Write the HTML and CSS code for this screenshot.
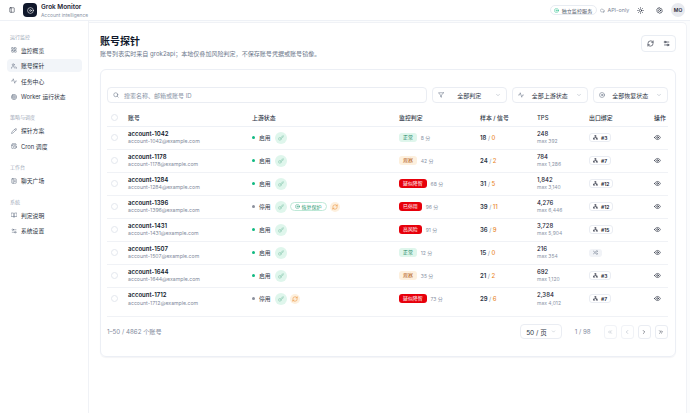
FILE: index.html
```html
<!DOCTYPE html>
<html lang="zh-CN">
<head>
  <meta charset="UTF-8" />
  <title>Grok Monitor</title>
  <link rel="stylesheet" href="styles.css">
</head>
<body>

  <svg class="sprite" width="0" height="0">
    <symbol id="i-panel" viewBox="0 0 24 24"><rect x="3" y="3" width="18" height="18" rx="2"/><path d="M9 3v18"/></symbol>
    <symbol id="i-search" viewBox="0 0 24 24"><circle cx="11" cy="11" r="8"/><path d="m21 21-4.3-4.3"/></symbol>
    <symbol id="i-funnel" viewBox="0 0 24 24"><path d="M22 3H2l8 9.46V19l4 2v-8.54L22 3z"/></symbol>
    <symbol id="i-activity" viewBox="0 0 24 24"><path d="M22 12h-4l-3 9L9 3l-3 9H2"/></symbol>
    <symbol id="i-target" viewBox="0 0 24 24"><circle cx="12" cy="12" r="10"/><circle cx="12" cy="12" r="3"/></symbol>
    <symbol id="i-down" viewBox="0 0 24 24"><path d="m6 9 6 6 6-6"/></symbol>
    <symbol id="i-refresh" viewBox="0 0 24 24"><path d="M3 12a9 9 0 0 1 9-9 9.75 9.75 0 0 1 6.74 2.74L21 8"/><path d="M21 3v5h-5"/><path d="M21 12a9 9 0 0 1-9 9 9.75 9.75 0 0 1-6.74-2.74L3 16"/><path d="M8 16H3v5"/></symbol>
    <symbol id="i-sliders" viewBox="0 0 24 24"><path d="M20 7h-9"/><path d="M14 17H5"/><circle cx="17" cy="17" r="3"/><circle cx="7" cy="7" r="3"/></symbol>
    <symbol id="i-eye" viewBox="0 0 24 24"><path d="M2 12s3-7 10-7 10 7 10 7-3 7-10 7-10-7-10-7Z"/><circle cx="12" cy="12" r="3"/></symbol>
    <symbol id="i-key" viewBox="0 0 24 24"><circle cx="7.5" cy="15.5" r="5.5"/><path d="m21 2-9.6 9.6"/><path d="m15.5 7.5 3 3L22 7l-3-3"/></symbol>
    <symbol id="i-network" viewBox="0 0 24 24"><rect x="16" y="16" width="6" height="6" rx="1"/><rect x="2" y="16" width="6" height="6" rx="1"/><rect x="9" y="2" width="6" height="6" rx="1"/><path d="M5 16v-3a1 1 0 0 1 1-1h12a1 1 0 0 1 1 1v3"/><path d="M12 12V8"/></symbol>
    <symbol id="i-shuffle" viewBox="0 0 24 24"><path d="m18 14 4 4-4 4"/><path d="m18 2 4 4-4 4"/><path d="M2 18h2c4 0 6-12 10-12h8"/><path d="M2 6h2c4 0 6 12 10 12h8"/></symbol>
    <symbol id="i-sun" viewBox="0 0 24 24"><circle cx="12" cy="12" r="4"/><path d="M12 2v2M12 20v2M4.9 4.9l1.4 1.4M17.7 17.7l1.4 1.4M2 12h2M20 12h2M6.3 17.7l-1.4 1.4M19.1 4.9l-1.4 1.4"/></symbol>
    <symbol id="i-gear" viewBox="0 0 24 24"><path d="M12 2.5l2.2 2.6 3.4-.5 1 3.3 3 1.6-1.3 3.1 1.3 3-3 1.7-1 3.2-3.4-.4L12 22l-2.2-2.9-3.4.4-1-3.2-3-1.7 1.3-3-1.3-3.1 3-1.6 1-3.3 3.4.5z"/><circle cx="12" cy="12" r="3.5"/></symbol>
    <symbol id="i-cloud" viewBox="0 0 24 24"><path d="M17.5 19H9a7 7 0 1 1 6.71-9h1.79a4.5 4.5 0 1 1 0 9Z"/></symbol>
    <symbol id="i-first" viewBox="0 0 24 24"><path d="m11 17-5-5 5-5"/><path d="m18 17-5-5 5-5"/></symbol>
    <symbol id="i-prev" viewBox="0 0 24 24"><path d="m15 18-6-6 6-6"/></symbol>
    <symbol id="i-next" viewBox="0 0 24 24"><path d="m9 18 6-6-6-6"/></symbol>
    <symbol id="i-last" viewBox="0 0 24 24"><path d="m6 17 5-5-5-5"/><path d="m13 17 5-5-5-5"/></symbol>
    <symbol id="i-grid" viewBox="0 0 24 24"><rect x="3" y="3" width="7" height="7" rx="1"/><rect x="14" y="3" width="7" height="7" rx="1"/><rect x="14" y="14" width="7" height="7" rx="1"/><rect x="3" y="14" width="7" height="7" rx="1"/></symbol>
    <symbol id="i-users" viewBox="0 0 24 24"><path d="M16 21v-2a4 4 0 0 0-4-4H6a4 4 0 0 0-4 4v2"/><circle cx="9" cy="7" r="4"/><path d="M22 21v-2a4 4 0 0 0-3-3.87"/></symbol>
    <symbol id="i-cpu" viewBox="0 0 24 24"><rect x="4" y="4" width="16" height="16" rx="2"/><rect x="9" y="9" width="6" height="6"/><path d="M9 1v3M15 1v3M9 20v3M15 20v3M20 9h3M20 15h3M1 9h3M1 15h3"/></symbol>
    <symbol id="i-pencil" viewBox="0 0 24 24"><path d="M17 3a2.85 2.85 0 1 1 4 4L7.5 20.5 2 22l1.5-5.5Z"/><path d="m15 5 4 4"/></symbol>
    <symbol id="i-calendar" viewBox="0 0 24 24"><path d="M21 7.5V6a2 2 0 0 0-2-2H5a2 2 0 0 0-2 2v14a2 2 0 0 0 2 2h3.5"/><path d="M16 2v4M8 2v4M3 10h5"/><circle cx="16" cy="16" r="6"/><path d="M16 14v2l1 1"/></symbol>
    <symbol id="i-chat" viewBox="0 0 24 24"><rect x="3" y="3" width="18" height="18" rx="2"/><path d="M9 3v18M13 9h4M13 14h4"/></symbol>
    <symbol id="i-book" viewBox="0 0 24 24"><path d="M2 4h6a4 4 0 0 1 4 4v13a3 3 0 0 0-3-3H2z"/><path d="M22 4h-6a4 4 0 0 0-4 4v13a3 3 0 0 1 3-3h7z"/></symbol>
  </svg>

  <header class="topbar">
    <div class="topbar-left">
      <svg class="ic ic-6 dark"><use href="#i-panel"/></svg>
      <div class="logo"><svg class="ic ic-7 white"><use href="#i-target"/></svg></div>
      <div class="brand">
        <div class="brand-name">Grok Monitor</div>
        <div class="brand-sub">Account intelligence</div>
      </div>
    </div>
    <div class="topbar-right">
      <div class="service-chip"><svg class="ic ic-5 green"><use href="#i-target"/></svg>独立监控服务</div>
      <div class="api-mode"><svg class="ic ic-5"><use href="#i-cloud"/></svg>API-only</div>
      <svg class="ic ic-7 dark sun"><use href="#i-sun"/></svg>
      <svg class="ic ic-7 dark gear"><use href="#i-gear"/></svg>
      <div class="avatar">MO</div>
    </div>
  </header>

  <div class="layout">
    <nav class="sidebar">
      <div class="nav-group">
        <div class="nav-label">运行监控</div>
        <a class="nav-item"><svg class="ic ic-6"><use href="#i-grid"/></svg>监控概览</a>
        <a class="nav-item active"><svg class="ic ic-6"><use href="#i-users"/></svg>账号探针</a>
        <a class="nav-item"><svg class="ic ic-6"><use href="#i-activity"/></svg>任务中心</a>
        <a class="nav-item"><svg class="ic ic-6"><use href="#i-cpu"/></svg>Worker 运行状态</a>
      </div>
      <div class="nav-group">
        <div class="nav-label">策略与调度</div>
        <a class="nav-item"><svg class="ic ic-6"><use href="#i-pencil"/></svg>探针方案</a>
        <a class="nav-item"><svg class="ic ic-6"><use href="#i-calendar"/></svg>Cron 调度</a>
      </div>
      <div class="nav-group">
        <div class="nav-label">工作台</div>
        <a class="nav-item"><svg class="ic ic-6"><use href="#i-chat"/></svg>聊天广场</a>
      </div>
      <div class="nav-group">
        <div class="nav-label">系统</div>
        <a class="nav-item"><svg class="ic ic-6"><use href="#i-book"/></svg>判定说明</a>
        <a class="nav-item"><svg class="ic ic-6"><use href="#i-sliders"/></svg>系统设置</a>
      </div>
    </nav>

    <main class="main">
      <div class="page-head">
        <div>
          <h1>账号探针</h1>
          <p>账号列表实时来自 grok2api；本地仅叠加风险判定，不保存账号凭据或账号镜像。</p>
        </div>
        <div class="head-actions">
          <svg class="ic ic-7 dark"><use href="#i-refresh"/></svg>
          <svg class="ic ic-7 dark"><use href="#i-sliders"/></svg>
        </div>
      </div>

      <section class="card">
        <div class="filters">
          <div class="field search"><svg class="ic ic-6"><use href="#i-search"/></svg>搜索名称、邮箱或账号 ID</div>
          <div class="field select"><svg class="ic ic-6"><use href="#i-funnel"/></svg><span>全部判定</span><svg class="ic ic-6 pale"><use href="#i-down"/></svg></div>
          <div class="field select"><svg class="ic ic-6"><use href="#i-activity"/></svg><span>全部上游状态</span><svg class="ic ic-6 pale"><use href="#i-down"/></svg></div>
          <div class="field select"><svg class="ic ic-6"><use href="#i-target"/></svg><span>全部恢复状态</span><svg class="ic ic-6 pale"><use href="#i-down"/></svg></div>
        </div>

        <table class="accounts">
          <colgroup>
            <col class="c-check"><col class="c-account"><col class="c-upstream"><col class="c-verdict"><col class="c-sample"><col class="c-tps"><col class="c-bind"><col class="c-op">
          </colgroup>
          <thead>
            <tr><th><span class="check"></span></th><th>账号</th><th>上游状态</th><th>监控判定</th><th>样本 / 信号</th><th>TPS</th><th>出口绑定</th><th>操作</th></tr>
          </thead>
          <tbody>
            <tr>
              <td><span class="check"></span></td>
              <td><div class="name">account-1042</div><div class="mail">account-1042@example.com</div></td>
              <td><div class="status"><i class="dot on"></i>启用<span class="round key"><svg class="ic ic-6"><use href="#i-key"/></svg></span></div></td>
              <td><span class="badge ok">正常</span><span class="ago">8 分</span></td>
              <td class="nums">18 <em>/</em> <b>0</b></td>
              <td><div class="tps">248</div><div class="max">max 392</div></td>
              <td><span class="bind"><svg class="ic ic-5 dark"><use href="#i-network"/></svg>#3</span></td>
              <td><svg class="ic ic-7 dark"><use href="#i-eye"/></svg></td>
            </tr>
            <tr>
              <td><span class="check"></span></td>
              <td><div class="name">account-1178</div><div class="mail">account-1178@example.com</div></td>
              <td><div class="status"><i class="dot on"></i>启用<span class="round key"><svg class="ic ic-6"><use href="#i-key"/></svg></span></div></td>
              <td><span class="badge watch">观察</span><span class="ago">42 分</span></td>
              <td class="nums">24 <em>/</em> <b>2</b></td>
              <td><div class="tps">784</div><div class="max">max 1,286</div></td>
              <td><span class="bind"><svg class="ic ic-5 dark"><use href="#i-network"/></svg>#7</span></td>
              <td><svg class="ic ic-7 dark"><use href="#i-eye"/></svg></td>
            </tr>
            <tr>
              <td><span class="check"></span></td>
              <td><div class="name">account-1284</div><div class="mail">account-1284@example.com</div></td>
              <td><div class="status"><i class="dot on"></i>启用<span class="round key"><svg class="ic ic-6"><use href="#i-key"/></svg></span></div></td>
              <td><span class="badge bad">疑似降智</span><span class="ago">68 分</span></td>
              <td class="nums">31 <em>/</em> <b>5</b></td>
              <td><div class="tps">1,842</div><div class="max">max 3,140</div></td>
              <td><span class="bind"><svg class="ic ic-5 dark"><use href="#i-network"/></svg>#12</span></td>
              <td><svg class="ic ic-7 dark"><use href="#i-eye"/></svg></td>
            </tr>
            <tr>
              <td><span class="check"></span></td>
              <td><div class="name">account-1396</div><div class="mail">account-1396@example.com</div></td>
              <td><div class="status"><i class="dot off"></i>停用<span class="round key"><svg class="ic ic-6"><use href="#i-key"/></svg></span><span class="guard"><svg class="ic ic-5"><use href="#i-target"/></svg>恢复保护</span><span class="round sync"><svg class="ic ic-6"><use href="#i-refresh"/></svg></span></div></td>
              <td><span class="badge bad">已停用</span><span class="ago">96 分</span></td>
              <td class="nums">39 <em>/</em> <b>11</b></td>
              <td><div class="tps">4,276</div><div class="max">max 6,446</div></td>
              <td><span class="bind"><svg class="ic ic-5 dark"><use href="#i-network"/></svg>#12</span></td>
              <td><svg class="ic ic-7 dark"><use href="#i-eye"/></svg></td>
            </tr>
            <tr>
              <td><span class="check"></span></td>
              <td><div class="name">account-1431</div><div class="mail">account-1431@example.com</div></td>
              <td><div class="status"><i class="dot on"></i>启用<span class="round key"><svg class="ic ic-6"><use href="#i-key"/></svg></span></div></td>
              <td><span class="badge bad">高风险</span><span class="ago">91 分</span></td>
              <td class="nums">36 <em>/</em> <b>9</b></td>
              <td><div class="tps">3,728</div><div class="max">max 5,904</div></td>
              <td><span class="bind"><svg class="ic ic-5 dark"><use href="#i-network"/></svg>#15</span></td>
              <td><svg class="ic ic-7 dark"><use href="#i-eye"/></svg></td>
            </tr>
            <tr>
              <td><span class="check"></span></td>
              <td><div class="name">account-1507</div><div class="mail">account-1507@example.com</div></td>
              <td><div class="status"><i class="dot on"></i>启用<span class="round key"><svg class="ic ic-6"><use href="#i-key"/></svg></span></div></td>
              <td><span class="badge ok">正常</span><span class="ago">12 分</span></td>
              <td class="nums">15 <em>/</em> <b>0</b></td>
              <td><div class="tps">216</div><div class="max">max 354</div></td>
              <td><span class="bind none"><svg class="ic ic-5"><use href="#i-shuffle"/></svg></span></td>
              <td><svg class="ic ic-7 dark"><use href="#i-eye"/></svg></td>
            </tr>
            <tr>
              <td><span class="check"></span></td>
              <td><div class="name">account-1644</div><div class="mail">account-1644@example.com</div></td>
              <td><div class="status"><i class="dot on"></i>启用<span class="round key"><svg class="ic ic-6"><use href="#i-key"/></svg></span></div></td>
              <td><span class="badge watch">观察</span><span class="ago">35 分</span></td>
              <td class="nums">21 <em>/</em> <b>2</b></td>
              <td><div class="tps">692</div><div class="max">max 1,120</div></td>
              <td><span class="bind"><svg class="ic ic-5 dark"><use href="#i-network"/></svg>#3</span></td>
              <td><svg class="ic ic-7 dark"><use href="#i-eye"/></svg></td>
            </tr>
            <tr>
              <td><span class="check"></span></td>
              <td><div class="name">account-1712</div><div class="mail">account-1712@example.com</div></td>
              <td><div class="status"><i class="dot off"></i>停用<span class="round key"><svg class="ic ic-6"><use href="#i-key"/></svg></span><span class="round sync"><svg class="ic ic-6"><use href="#i-refresh"/></svg></span></div></td>
              <td><span class="badge bad">疑似降智</span><span class="ago">73 分</span></td>
              <td class="nums">29 <em>/</em> <b>6</b></td>
              <td><div class="tps">2,384</div><div class="max">max 4,012</div></td>
              <td><span class="bind"><svg class="ic ic-5 dark"><use href="#i-network"/></svg>#7</span></td>
              <td><svg class="ic ic-7 dark"><use href="#i-eye"/></svg></td>
            </tr>
          </tbody>
        </table>

        <div class="pager">
          <div class="total">1–50 / 4862 个账号</div>
          <div class="pager-right">
            <div class="per-page">50 / 页<svg class="ic ic-5 pale"><use href="#i-down"/></svg></div>
            <div class="page-no">1 / 98</div>
            <div class="page-btn off"><svg class="ic ic-6"><use href="#i-first"/></svg></div>
            <div class="page-btn off"><svg class="ic ic-6"><use href="#i-prev"/></svg></div>
            <div class="page-btn"><svg class="ic ic-6"><use href="#i-next"/></svg></div>
            <div class="page-btn"><svg class="ic ic-6"><use href="#i-last"/></svg></div>
          </div>
        </div>
      </section>
    </main>
  </div>

</body>
</html>
```

FILE: styles.css
```css
* {
  box-sizing: border-box;
}

html, body {
  margin: 0;
  height: 100%;
  overflow: hidden;
}

body {
  font-family: Inter, "Noto Sans CJK SC", sans-serif;
  font-size: 6px;
  color: #1c2333;
  background: #fbfcfd;
}

.sprite {
  display: block;
  height: 0;
}

.ic {
  flex: none;
  fill: none;
  stroke: #5f6b7e;
  stroke-width: 2;
  stroke-linecap: round;
  stroke-linejoin: round;
}
.ic-5 { width: 5px; height: 5px; }
.ic-6 { width: 6px; height: 6px; }
.ic-7 { width: 7px; height: 7px; }
.dark { stroke: #1c2333; }
.white { stroke: #fff; }
.green { stroke: #10b981; }
.pale { stroke: #a3acb9; }

/* top bar */
.topbar {
  display: flex;
  justify-content: space-between;
  align-items: center;
  height: 21px;
  padding: 0 5px 0 9px;
  border-bottom: 1px solid #eef1f6;
  background: #fff;
}

.topbar-left, .topbar-right {
  display: flex;
  align-items: center;
}

.logo {
  display: flex;
  align-items: center;
  justify-content: center;
  width: 14px;
  height: 14px;
  margin-left: 8px;
  border-radius: 4px;
  background: #10182b;
}

.brand {
  margin-left: 4px;
}

.brand-name {
  font-size: 6.4px;
  font-weight: 600;
  line-height: 8px;
}

.brand-sub {
  margin-top: 1px;
  font-size: 4.9px;
  line-height: 6px;
  color: #8a94a6;
}

.service-chip {
  display: flex;
  align-items: center;
  gap: 2.5px;
  height: 10px;
  padding: 0 3.5px;
  border: 1px solid #e8ecf2;
  border-radius: 5px;
  font-size: 5.1px;
  color: #475063;
}

.api-mode {
  display: flex;
  align-items: center;
  gap: 2px;
  margin-left: 3.7px;
  font-size: 5.4px;
  color: #7b8698;
}

.sun { margin-left: 7.5px; }
.gear { margin-left: 12.2px; }

.avatar {
  display: flex;
  align-items: center;
  justify-content: center;
  width: 14px;
  height: 14px;
  margin-left: 8px;
  border-radius: 50%;
  background: #e8eaef;
  font-size: 5px;
  font-weight: 600;
}

/* sidebar */
.layout {
  display: flex;
  height: 392px;
}

.sidebar {
  flex: none;
  width: 89px;
  padding: 11.6px 6px 0 7px;
  background: #fff;
  border-right: 1px solid #f0f2f6;
}

.nav-group {
  margin-bottom: 10.4px;
}

.nav-label {
  height: 8.5px;
  padding-left: 3px;
  font-size: 5px;
  line-height: 8px;
  color: #a0a9b8;
}

.nav-item {
  display: flex;
  align-items: center;
  gap: 4.5px;
  height: 13px;
  margin-top: 2.5px;
  padding-left: 3.5px;
  border-radius: 4px;
  font-size: 5.8px;
  color: #2d3545;
}

.nav-item.active {
  background: #f2f5f9;
}

/* main */
.main {
  flex: 1;
  margin: 1px 3px 0 0;
  padding: 10px 10px 0 11px;
  background: #fff;
  border: 1px solid #f0f2f6;
  border-left: 0;
  border-bottom: 0;
  border-radius: 0 5px 0 0;
}

.page-head {
  display: flex;
  justify-content: space-between;
  align-items: flex-start;
  height: 33px;
}

h1 {
  margin: 1px 0 0;
  font-size: 10px;
  font-weight: 600;
  line-height: 14px;
  color: #10182b;
}

.page-head p {
  margin: 2px 0 0;
  font-size: 6.05px;
  line-height: 8px;
  color: #6d788b;
}

.head-actions {
  display: flex;
  align-items: center;
  gap: 9px;
  height: 17px;
  margin-top: 2px;
  padding: 0 5px;
  border: 1px solid #e9edf3;
  border-radius: 4px;
}

.card {
  margin-top: 3px;
  height: 288px;
  padding: 17px 7px 0 6px;
  border: 1px solid #eceff5;
  border-radius: 6px;
  box-shadow: 0 1px 1px rgba(30, 40, 70, 0.05);
}

.filters {
  display: flex;
  gap: 5px;
}

.field {
  display: flex;
  align-items: center;
  height: 16px;
  border: 1px solid #eaedf3;
  border-radius: 4px;
  font-size: 6px;
  background: #fff;
}

.search {
  flex: 1;
  gap: 5px;
  padding-left: 5px;
  color: #8a94a6;
}

.select {
  flex: none;
  width: 75.5px;
  padding: 0 5px;
  color: #2d3545;
}

.select span {
  flex: 1;
  text-align: center;
}

/* table */
.accounts {
  width: 100%;
  margin-top: 7px;
  border-collapse: collapse;
  table-layout: fixed;
}

.c-check { width: 21px; }
.c-account { width: 124px; }
.c-upstream { width: 147px; }
.c-verdict { width: 81px; }
.c-sample { width: 57px; }
.c-tps { width: 52px; }
.c-bind { width: 65px; }

.accounts th {
  height: 16px;
  padding: 0;
  border-bottom: 1px solid #eef1f6;
  font-size: 5.9px;
  font-weight: 500;
  text-align: left;
  white-space: nowrap;
  color: #2d3545;
}

.accounts td {
  height: 23px;
  padding: 0;
  border-bottom: 1px solid #f0f2f6;
  vertical-align: middle;
  white-space: nowrap;
}

.accounts tbody tr:last-child td {
  border-bottom: 0;
}

.accounts th:first-child, .accounts td:first-child {
  padding-left: 4px;
}

.check {
  display: block;
  width: 7px;
  height: 7px;
  border: 1px solid #e3e7ee;
  border-radius: 50%;
}

.name {
  font-size: 6px;
  font-weight: 600;
  line-height: 8px;
  color: #10182b;
}

.mail {
  margin-top: 0.5px;
  font-size: 5.2px;
  line-height: 7px;
  color: #7f8a9c;
}

.status {
  display: flex;
  align-items: center;
  font-size: 5.8px;
  color: #2d3545;
}

.dot {
  width: 3px;
  height: 3px;
  margin-right: 4px;
  border-radius: 50%;
}
.dot.on { background: #10b981; }
.dot.off { background: #8a8f9c; }

.round {
  display: flex;
  align-items: center;
  justify-content: center;
  width: 12px;
  height: 12px;
  border-radius: 50%;
}

.key {
  margin-left: 4px;
  background: #dff6ec;
}
.key .ic { stroke: #6bb89c; stroke-width: 1.7; }

.sync {
  margin-left: 3px;
  width: 10px;
  height: 10px;
  background: #fdf0de;
}
.sync .ic { stroke: #ea8a2e; }

.guard {
  display: flex;
  align-items: center;
  gap: 2px;
  height: 9.5px;
  margin-left: 3px;
  padding: 0 4px;
  border: 1px solid #bfe9d8;
  border-radius: 5px;
  font-size: 5px;
  color: #1f9a70;
}
.guard .ic { stroke: #1f9a70; }

.badge {
  display: inline-block;
  height: 9px;
  padding: 0 4px;
  border-radius: 3px;
  font-size: 4.9px;
  line-height: 9px;
  vertical-align: middle;
}
.badge.ok { background: #dff6ec; color: #12875f; }
.badge.watch { background: #fdf0de; color: #b4621a; }
.badge.bad { background: #e7000b; color: #fff; }

.ago {
  margin-left: 4px;
  font-size: 5px;
  color: #8a94a6;
  vertical-align: middle;
}

.nums {
  font-size: 6px;
  font-weight: 600;
  color: #2d3545;
}
.nums em { font-style: normal; font-weight: 400; color: #8a94a6; }
.nums b { font-weight: 500; color: #ea8a2e; }

.tps {
  font-size: 6px;
  font-weight: 500;
  line-height: 8px;
}

.max {
  margin-top: 0.5px;
  font-size: 5px;
  line-height: 7px;
  color: #8a94a6;
}

.bind {
  display: inline-flex;
  align-items: center;
  gap: 3px;
  height: 9px;
  padding: 0 3px;
  border: 1px solid #eaedf3;
  border-radius: 3px;
  font-size: 5px;
  font-weight: 600;
}

.bind.none {
  height: 8px;
  border: 0;
  padding: 0 4px;
  background: #f1f3f7;
}

/* pager */
.pager {
  display: flex;
  justify-content: space-between;
  align-items: center;
  height: 30px;
  margin-top: 6px;
  border-top: 1px solid #f0f2f6;
}

.total {
  font-size: 6.2px;
  color: #7f8a9c;
}

.pager-right {
  display: flex;
  align-items: center;
}

.per-page {
  display: flex;
  align-items: center;
  justify-content: space-between;
  width: 41.5px;
  height: 15.5px;
  padding: 0 5px;
  border: 1px solid #eaedf3;
  border-radius: 4px;
  font-size: 6.5px;
  color: #2d3545;
}

.page-no {
  width: 42px;
  text-align: center;
  font-size: 6.2px;
  color: #7f8a9c;
}

.page-btn {
  display: flex;
  align-items: center;
  justify-content: center;
  width: 13.4px;
  height: 14px;
  margin-right: 3.6px;
  border: 1px solid #eaedf3;
  border-radius: 3px;
}
.page-btn:last-child { margin-right: 0; }
.page-btn .ic { stroke: #1c2333; }
.page-btn.off { border-color: #f1f3f7; }
.page-btn.off .ic { stroke: #a3acb9; }
```
